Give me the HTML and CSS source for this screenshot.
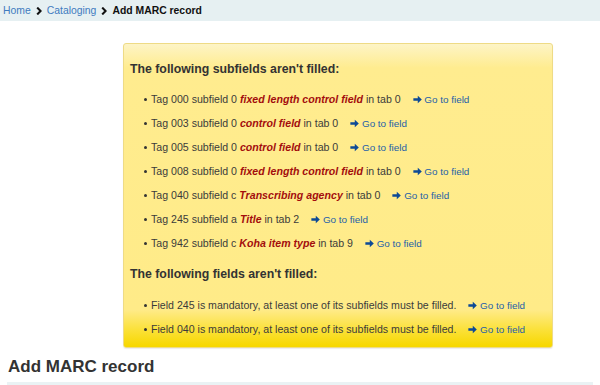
FILE: index.html
```html
<!DOCTYPE html>
<html lang="en">
<head>
<meta charset="utf-8">
<title>Add MARC record</title>
<link rel="stylesheet" href="styles.css">
</head>
<body>
<nav class="breadcrumbs">
  <a href="#">Home</a>
  <svg class="sep" viewBox="0 0 6 8" width="6" height="8"><path d="M1.2 0.6 L4.6 4 L1.2 7.4" fill="none" stroke="#111" stroke-width="2.1"/></svg>
  <a href="#">Cataloging</a>
  <svg class="sep" viewBox="0 0 6 8" width="6" height="8"><path d="M1.2 0.6 L4.6 4 L1.2 7.4" fill="none" stroke="#111" stroke-width="2.1"/></svg>
  <strong>Add MARC record</strong>
</nav>
<main class="main">
  <div class="alert">
    <h3 class="alert-title">The following subfields aren't filled:</h3>
    <ul class="items">
      <li>Tag 000 subfield 0 <em class="fld">fixed length control field</em> in tab 0 <a class="goto" href="#"><svg viewBox="0 0 10 10" width="9" height="9"><path d="M0.4 3.6h4.9V0.7L9.8 5 5.3 9.3V6.4H0.4z" fill="#0d4a96"/></svg> Go to field</a></li>
      <li>Tag 003 subfield 0 <em class="fld">control field</em> in tab 0 <a class="goto" href="#"><svg viewBox="0 0 10 10" width="9" height="9"><path d="M0.4 3.6h4.9V0.7L9.8 5 5.3 9.3V6.4H0.4z" fill="#0d4a96"/></svg> Go to field</a></li>
      <li>Tag 005 subfield 0 <em class="fld">control field</em> in tab 0 <a class="goto" href="#"><svg viewBox="0 0 10 10" width="9" height="9"><path d="M0.4 3.6h4.9V0.7L9.8 5 5.3 9.3V6.4H0.4z" fill="#0d4a96"/></svg> Go to field</a></li>
      <li>Tag 008 subfield 0 <em class="fld">fixed length control field</em> in tab 0 <a class="goto" href="#"><svg viewBox="0 0 10 10" width="9" height="9"><path d="M0.4 3.6h4.9V0.7L9.8 5 5.3 9.3V6.4H0.4z" fill="#0d4a96"/></svg> Go to field</a></li>
      <li>Tag 040 subfield c <em class="fld">Transcribing agency</em> in tab 0 <a class="goto" href="#"><svg viewBox="0 0 10 10" width="9" height="9"><path d="M0.4 3.6h4.9V0.7L9.8 5 5.3 9.3V6.4H0.4z" fill="#0d4a96"/></svg> Go to field</a></li>
      <li>Tag 245 subfield a <em class="fld">Title</em> in tab 2 <a class="goto" href="#"><svg viewBox="0 0 10 10" width="9" height="9"><path d="M0.4 3.6h4.9V0.7L9.8 5 5.3 9.3V6.4H0.4z" fill="#0d4a96"/></svg> Go to field</a></li>
      <li>Tag 942 subfield c <em class="fld">Koha item type</em> in tab 9 <a class="goto" href="#"><svg viewBox="0 0 10 10" width="9" height="9"><path d="M0.4 3.6h4.9V0.7L9.8 5 5.3 9.3V6.4H0.4z" fill="#0d4a96"/></svg> Go to field</a></li>
    </ul>
    <h3 class="alert-title second">The following fields aren't filled:</h3>
    <ul class="items last">
      <li>Field 245 is mandatory, at least one of its subfields must be filled. <a class="goto" href="#"><svg viewBox="0 0 10 10" width="9" height="9"><path d="M0.4 3.6h4.9V0.7L9.8 5 5.3 9.3V6.4H0.4z" fill="#0d4a96"/></svg> Go to field</a></li>
      <li>Field 040 is mandatory, at least one of its subfields must be filled. <a class="goto" href="#"><svg viewBox="0 0 10 10" width="9" height="9"><path d="M0.4 3.6h4.9V0.7L9.8 5 5.3 9.3V6.4H0.4z" fill="#0d4a96"/></svg> Go to field</a></li>
    </ul>
  </div>
  <h1 class="page-title">Add MARC record</h1>
  <div class="toolbar"></div>
</main>
</body>
</html>
```
FILE: styles.css
```css
html, body {
  margin: 0;
  padding: 0;
  background: #ffffff;
  font-family: "Liberation Sans", Arial, sans-serif;
  color: #333333;
}

.breadcrumbs {
  height: 21px;
  background: #e6f0f2;
  display: flex;
  align-items: center;
  gap: 5px;
  padding: 0 3px;
  font-size: 10.4px;
  box-sizing: border-box;
}

.breadcrumbs a {
  color: #3f7bbf;
  text-decoration: none;
}

.breadcrumbs strong {
  color: #111;
  font-weight: bold;
}

.breadcrumbs .sep {
  display: block;
}

.main {
  padding: 0 7px;
}

.alert {
  margin: 22px 0 0 116px;
  width: 430px;
  box-sizing: border-box;
  border: 1px solid #eedb86;
  border-radius: 3px;
  box-shadow: 0 1px 1px rgba(0, 0, 0, 0.08);
  background: linear-gradient(to bottom, #fdf4c6 0px, #ffec8f 24px, #ffeb88 266px, #fbe13c 285px, #f7d800 302px);
  padding: 17px 6px 6px 6px;
}

.alert-title {
  margin: 0;
  font-size: 12.3px;
  line-height: 16px;
  font-weight: bold;
  color: #333333;
}

.alert-title.second {
  margin-top: 11px;
}

.items {
  list-style: none;
  margin: 10px 0 0 0;
  padding: 0 0 0 21px;
  font-size: 10.6px;
  line-height: 24px;
  color: #3b3b3b;
}

.items.last {
  margin-top: 11px;
}

.items li {
  position: relative;
  white-space: nowrap;
  height: 24px;
}

.items li::before {
  content: "";
  position: absolute;
  left: -7px;
  top: 11px;
  width: 3px;
  height: 3px;
  border-radius: 50%;
  background: #333;
}

.fld {
  color: #a30d0d;
  font-weight: bold;
  font-style: italic;
}

.goto {
  margin-left: 9px;
  color: #1e5fa8;
  text-decoration: none;
  font-size: 9.9px;
  line-height: 1;
}

.goto svg {
  display: inline-block;
  vertical-align: -1px;
}

.page-title {
  margin: 9px 0 0 1px;
  font-size: 17px;
  line-height: 20px;
  font-weight: bold;
  color: #333333;
}

.toolbar {
  margin-top: 5px;
  height: 20px;
  background: #eaf2f4;
}
```
